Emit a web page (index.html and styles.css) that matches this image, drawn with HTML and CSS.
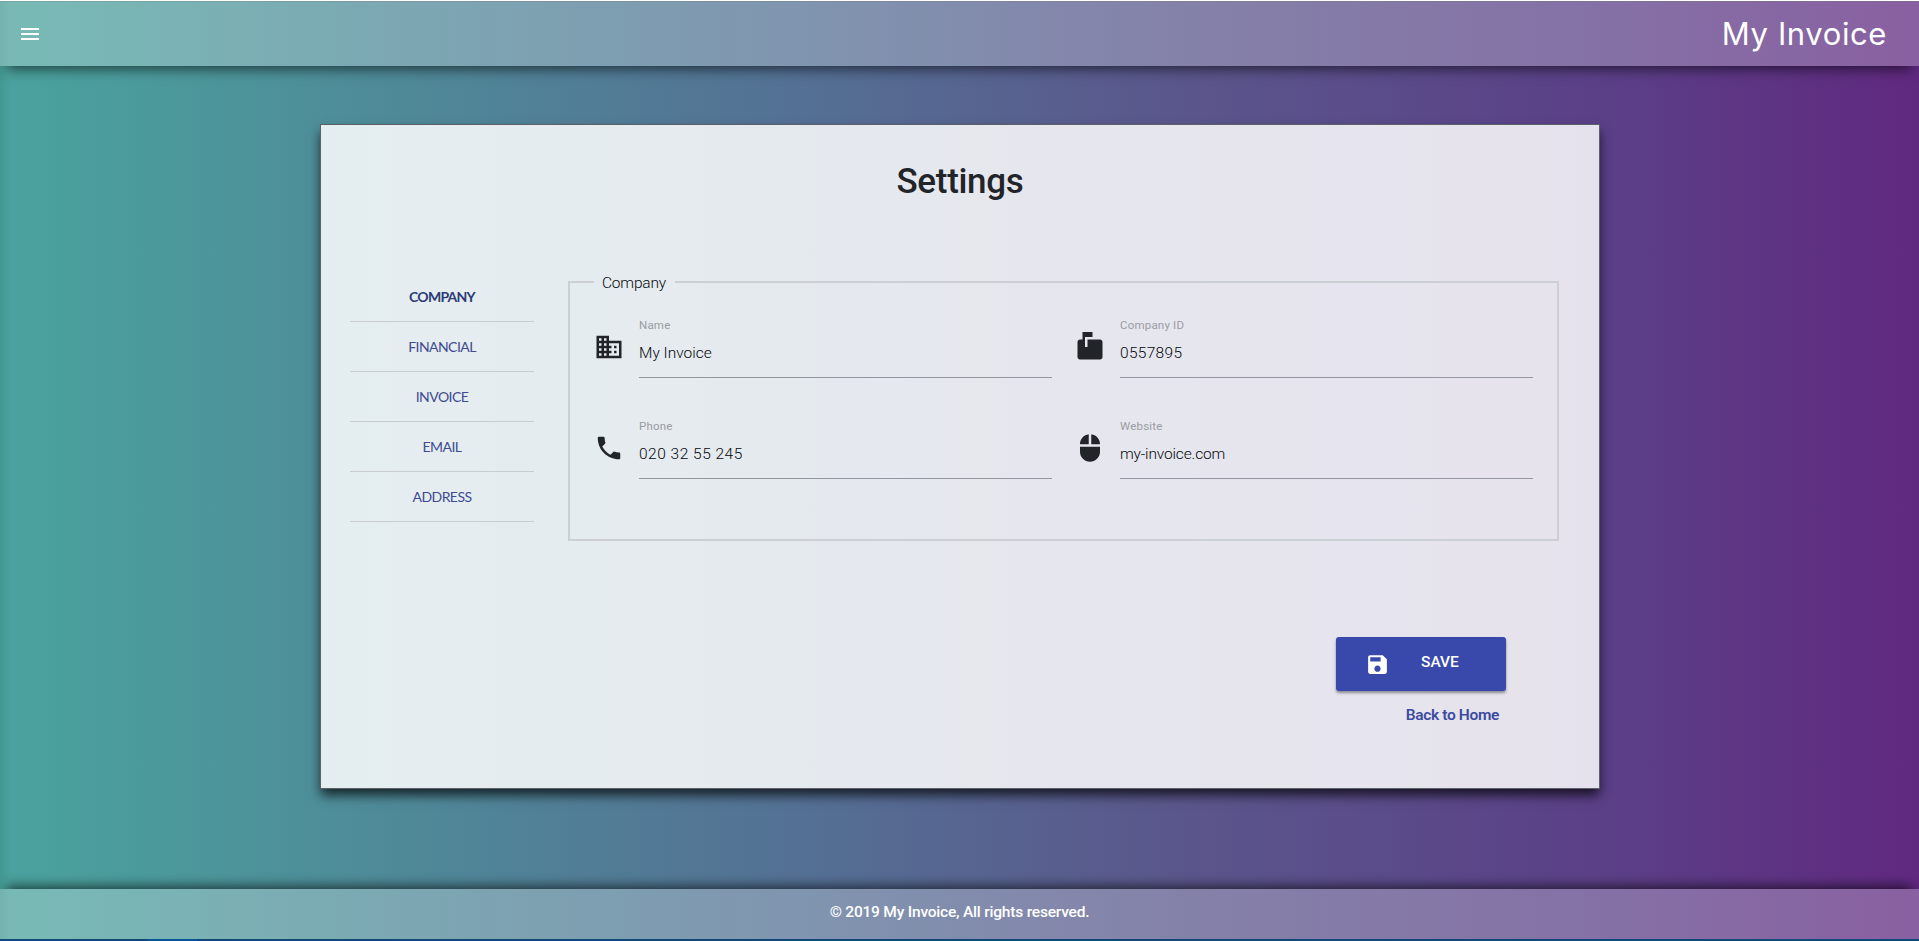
FILE: index.html
```html
<!DOCTYPE html>
<html lang="en">
<head>
<meta charset="utf-8">
<title>My Invoice</title>
<link rel="stylesheet" href="styles.css">
</head>
<body>
<header class="topbar">
  <svg class="menu" viewBox="0 0 18 12"><path d="M0 12h18v-2H0v2zm0-5h18V5H0v2zm0-7v2h18V0H0z"/></svg>
  <span class="brand">My Invoice</span>
</header>
<main class="main">
  <section class="card">
    <h1 class="title"><span>Settings</span></h1>
    <div class="content">
      <nav class="tabs">
        <a class="tab active">COMPANY</a>
        <a class="tab">FINANCIAL</a>
        <a class="tab">INVOICE</a>
        <a class="tab">EMAIL</a>
        <a class="tab">ADDRESS</a>
      </nav>
      <fieldset class="group">
        <legend class="legend">Company</legend>
        <div class="fields">
          <div class="field">
            <svg class="icon" viewBox="0 0 24 24"><path d="M12 7V3H2v18h20V7H12zM6 19H4v-2h2v2zm0-4H4v-2h2v2zm0-4H4V9h2v2zm0-4H4V5h2v2zm4 12H8v-2h2v2zm0-4H8v-2h2v2zm0-4H8V9h2v2zm0-4H8V5h2v2zm10 12h-8v-2h2v-2h-2v-2h2v-2h-2V9h8v10zm-2-8h-2v2h2v-2zm0 4h-2v2h2v-2z"/></svg>
            <div class="input"><span class="label">Name</span><span class="value">My Invoice</span></div>
          </div>
          <div class="field">
            <svg class="icon" viewBox="0 0 24 24"><path d="M20 6H10v6H8V4h6V0H6v6H4c-1.100 0-2 .9-2 2v12c0 1.100.9 2 2 2h16c1.100 0 2-.9 2-2V8c0-1.100-.9-2-2-2z"/></svg>
            <div class="input"><span class="label">Company ID</span><span class="value t-num">0557895</span></div>
          </div>
          <div class="field">
            <svg class="icon" viewBox="0 0 24 24"><path d="M6.620 10.790c1.440 2.830 3.760 5.140 6.590 6.590l2.200-2.200c.27-.27.67-.36 1.020-.24 1.120.37 2.330.57 3.570.57.55 0 1 .45 1 1V20c0 .55-.45 1-1 1-9.390 0-17-7.610-17-17 0-.55.45-1 1-1h3.500c.55 0 1 .45 1 1 0 1.250.2 2.450.57 3.570.11.35.03.74-.25 1.020l-2.200 2.200z"/></svg>
            <div class="input"><span class="label">Phone</span><span class="value t-phone">020 32 55 245</span></div>
          </div>
          <div class="field">
            <svg class="icon" viewBox="0 0 24 24"><path d="M13 1.070V9h7c0-4.080-3.050-7.440-7-7.930zM4 15c0 4.420 3.580 8 8 8s8-3.580 8-8v-4H4v4zm7-13.930C7.050 1.560 4 4.920 4 9h7V1.070z"/></svg>
            <div class="input"><span class="label">Website</span><span class="value t-site">my-invoice.com</span></div>
          </div>
        </div>
      </fieldset>
    </div>
    <div class="actions">
      <button class="save">
        <svg class="save-icon" viewBox="0 0 24 24"><path d="M17 3H5c-1.110 0-2 .9-2 2v14c0 1.100.89 2 2 2h14c1.100 0 2-.9 2-2V7l-4-4zm-5 16c-1.660 0-3-1.340-3-3s1.340-3 3-3 3 1.340 3 3-1.340 3-3 3zm3-10H5V5h10v4z"/></svg>
        <span class="t-save">SAVE</span>
      </button>
      <a class="back">Back to Home</a>
    </div>
  </section>
</main>
<footer class="footer">© 2019 My Invoice, All rights reserved.</footer>
<div class="taskbar"><div class="task"></div></div>
</body>
</html>
```
FILE: styles.css
```css
* { box-sizing: border-box; }
body {
  margin: 0;
  height: 941px;
  overflow: hidden;
  display: flex;
  flex-direction: column;
  border-top: 1px solid #fff;
  font-family: Roboto, "Liberation Sans", sans-serif;
  color: #212529;
  background: linear-gradient(to right, #439791 0, #4aa19d 10px, #4aa19d 2%, #4f8998 21%, #547094 42%, #5a588c 60%, #5b3f87 84%, #602980 100%);
}
.topbar {
  height: 65px;
  flex: none;
  display: flex;
  align-items: center;
  justify-content: space-between;
  padding: 0 32px 1px 21px;
  border-top: 1px solid rgba(120, 120, 120, .3);
  background: rgba(255, 255, 255, .26);
  box-shadow: 0 10px 12px -7px rgba(0, 0, 0, .6);
}
.menu { width: 18px; height: 12px; fill: #fff; }
.brand {
  font: 400 31px/60px Inter, sans-serif;
  color: #fff;
  letter-spacing: .6px;
}
.main {
  flex: 1;
  display: flex;
  justify-content: center;
  align-items: flex-start;
  padding: 58px 0 0 1px;
}
.card {
  width: 1280px;
  height: 665px;
  border: 1px solid #5c6169;
  background: rgba(255, 255, 255, .85);
  box-shadow: 0 7px 11px -1px rgba(0, 0, 0, .75);
}
.title {
  margin: 0;
  height: 147px;
  padding-top: 37px;
  text-align: center;
  font-size: 35px;
  line-height: 40px;
  font-weight: 500;
  letter-spacing: -.3px;
}
.content { display: flex; padding: 0 40px 0 29px; align-items: flex-start; }
.tabs { width: 184px; display: flex; flex-direction: column; }
.tab {
  height: 50px;
  border-bottom: 1px solid #c9cdd1;
  font: 400 14px/50px Lato, sans-serif;
  text-align: center;
  color: #3f4a93;
  letter-spacing: -.55px;
}
.active { font-weight: 700; color: #2c3b76; letter-spacing: -.75px; }
.group {
  flex: 1;
  height: 269px;
  min-width: 0;
  margin: 0 0 0 34px;
  padding: 0 24px;
  border: 2px solid #cccfd4;
}
.legend {
  width: 81px;
  height: 20px;
  padding: 0 0 0 8px;
  font-size: 15.500px;
  font-weight: 300;
  letter-spacing: -.2px;
  line-height: 22px;
  color: #05080b;
}
.fields { display: grid; grid-template-columns: 1fr 1fr; column-gap: 23px; padding-top: 23px; }
.field { display: flex; height: 101px; }
.icon { width: 30px; height: 30px; margin: 17px 15px 0 0; fill: #212529; flex: none; }
.input {
  flex: 1;
  height: 63px;
  display: flex;
  flex-direction: column;
  border-bottom: 1px solid #9497a0;
}
.label { font-size: 11.500px; line-height: 20px; color: #9a9ca3; letter-spacing: .2px; }
.value { font-size: 15.500px; font-weight: 300; line-height: 20px; margin-top: 8px; color: #05080b; }
.t-num { letter-spacing: .3px; }
.t-phone { letter-spacing: .5px; }
.t-site { letter-spacing: -.15px; }
.actions { display: flex; flex-direction: column; align-items: flex-end; padding: 96px 93px 0 0; }
.save {
  width: 170px;
  height: 54px;
  display: flex;
  align-items: center;
  padding: 0 0 0 29px;
  border: 0;
  border-radius: 3px;
  background: #3849ab;
  box-shadow: 0 2px 3px rgba(0, 0, 0, .4);
  color: #fff;
  font: 500 15.500px Roboto, sans-serif;
}
.save-icon { width: 25px; height: 25px; fill: #fff; margin-right: 31px; }
.t-save { padding-bottom: 4px; }
.back { margin: 14px 7px 0 0; color: #3c4aa0; font-size: 15.500px; line-height: 21px; font-weight: 600; letter-spacing: -.35px; }
.footer {
  height: 50px;
  flex: none;
  background: rgba(255, 255, 255, .26);
  box-shadow: 0 -10px 12px -7px rgba(0, 0, 0, .6);
  color: #fff;
  text-align: center;
  font-size: 15.500px;
  line-height: 46px;
  font-weight: 500;
  letter-spacing: -.2px;
}
.taskbar { height: 2px; flex: none; background: #10487a; padding-left: 148px; }
.task { width: 49px; height: 2px; background: #075497; }
```
